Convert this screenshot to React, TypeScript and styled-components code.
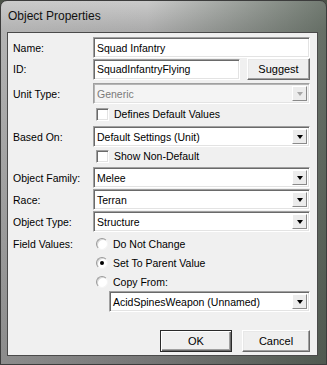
import styled, { createGlobalStyle } from 'styled-components';

const Global = createGlobalStyle`
  html, body { margin: 0; padding: 0; background: #4b5248; }
  body { font-family: "Liberation Sans", Arial, sans-serif; }
`;

const Frame = styled.div`
  width: 327px;
  height: 365px;
  box-sizing: border-box;
  padding: 31px 8px 8px 6px;
  border-radius: 7px 7px 0 0;
  border: 1px solid #3c3c3c;
  background:
    linear-gradient(90deg, rgba(205,205,205,0.25) 0%, rgba(60,70,60,0.0) 45%, rgba(55,70,55,0.6) 100%),
    linear-gradient(180deg, #cacaca 0%, #ababab 8%, #8c8c8c 60%, #767676 100%);
  display: flex;
  flex-direction: column;
  position: relative;
`;

const Title = styled.div`
  position: absolute;
  left: 7px;
  top: 8px;
  font-size: 12px;
  color: #111;
`;

const Client = styled.div`
  flex: 1;
  background: #f0f0f0;
  border: 1px solid #4a4a4a;
  padding: 4px 7px 0 5px;
  display: flex;
  flex-direction: column;
  font-size: 10.5px;
  color: #000;
`;

const Row = styled.div<{ $h: number; $mt?: number }>`
  display: grid;
  grid-template-columns: 80px 1fr;
  align-items: center;
  height: ${(p) => p.$h}px;
  margin-top: ${(p) => p.$mt ?? 0}px;
`;

const Label = styled.div`
  white-space: nowrap;
`;

const Sunken = styled.div<{ $disabled?: boolean }>`
  box-sizing: border-box;
  height: 100%;
  display: flex;
  align-items: center;
  background: ${(p) => (p.$disabled ? '#f4f4f4' : '#fff')};
  border: 1px solid;
  border-color: #a0a0a0 #fff #fff #a0a0a0;
  box-shadow: inset 1px 1px 0 ${(p) => (p.$disabled ? '#b5b5b5' : '#6a6a6a')}, inset -1px -1px 0 #e3e3e3;
  color: ${(p) => (p.$disabled ? '#7a7a7a' : '#000')};
  padding-left: 3px;
  white-space: nowrap;
  overflow: hidden;
`;

const Text = styled.span`
  flex: 1;
`;

const Arrow = styled.div<{ $disabled?: boolean }>`
  width: 15px;
  height: calc(100% - 4px);
  margin-right: 2px;
  box-sizing: border-box;
  background: #ececec;
  border: 1px solid;
  border-color: #fff #8a8a8a #8a8a8a #fff;
  display: flex;
  align-items: center;
  justify-content: center;
  &::after {
    content: '';
    border-left: 3.5px solid transparent;
    border-right: 3.5px solid transparent;
    border-top: 4px solid ${(p) => (p.$disabled ? '#a8a8a8' : '#000')};
  }
`;

const Pair = styled.div`
  display: flex;
  height: 100%;
  align-items: center;
  gap: 7px;
`;

const Button = styled.div<{ $w: number; $default?: boolean }>`
  box-sizing: border-box;
  width: ${(p) => p.$w}px;
  height: 22px;
  display: flex;
  align-items: center;
  justify-content: center;
  background: #efefef;
  border: 1px solid;
  border-color: ${(p) => (p.$default ? '#2a2a2a' : '#fff #6a6a6a #6a6a6a #fff')};
  box-shadow: ${(p) =>
    p.$default
      ? 'inset 1px 1px 0 #fff, inset -1px -1px 0 #6a6a6a, inset -2px -2px 0 #a0a0a0'
      : 'inset -1px -1px 0 #a0a0a0, inset 1px 1px 0 #e8e8e8'};
  font-size: 11px;
`;

const Check = styled.div`
  display: flex;
  align-items: center;
  gap: 5px;
  padding-left: 3px;
`;

const Box = styled.span`
  box-sizing: border-box;
  width: 13px;
  height: 13px;
  background: #fff;
  border: 1px solid;
  border-color: #a0a0a0 #fff #fff #a0a0a0;
  box-shadow: inset 1px 1px 0 #6a6a6a, inset -1px -1px 0 #e3e3e3;
`;

const Radio = styled.span<{ $on?: boolean }>`
  box-sizing: border-box;
  width: 12px;
  height: 12px;
  border-radius: 50%;
  background: #fff;
  border: 1px solid;
  border-color: #9a9a9a #f4f4f4 #f4f4f4 #9a9a9a;
  box-shadow: inset 1px 1px 0 #d8d8d8;
  display: flex;
  align-items: center;
  justify-content: center;
  &::after {
    content: '';
    display: ${(p) => (p.$on ? 'block' : 'none')};
    width: 4px;
    height: 4px;
    border-radius: 50%;
    background: #000;
  }
`;

const Indent = styled.div`
  padding-left: 16px;
  height: 100%;
`;

const Footer = styled.div`
  display: flex;
  justify-content: flex-end;
  gap: 10px;
  margin-top: 18px;
`;

function Select({ value, disabled }: { value: string; disabled?: boolean }) {
  return (
    <Sunken $disabled={disabled}>
      <Text>{value}</Text>
      <Arrow $disabled={disabled} />
    </Sunken>
  );
}

export default function App() {
  return (
    <>
      <Global />
      <Frame>
        <Title>Object Properties</Title>
        <Client>
          <Row $h={21}>
            <Label>Name:</Label>
            <Sunken>Squad Infantry</Sunken>
          </Row>
          <Row $h={22} $mt={0}>
            <Label>ID:</Label>
            <Pair>
              <Sunken style={{ width: 147, height: 21 }}>SquadInfantryFlying</Sunken>
              <Button $w={63}>Suggest</Button>
            </Pair>
          </Row>
          <Row $h={21} $mt={3}>
            <Label>Unit Type:</Label>
            <Select value="Generic" disabled />
          </Row>
          <Row $h={18} $mt={1}>
            <Label />
            <Check>
              <Box />
              Defines Default Values
            </Check>
          </Row>
          <Row $h={21} $mt={3}>
            <Label>Based On:</Label>
            <Select value="Default Settings (Unit)" />
          </Row>
          <Row $h={18} $mt={0}>
            <Label />
            <Check>
              <Box />
              Show Non-Default
            </Check>
          </Row>
          <Row $h={21} $mt={2}>
            <Label>Object Family:</Label>
            <Select value="Melee" />
          </Row>
          <Row $h={21} $mt={1}>
            <Label>Race:</Label>
            <Select value="Terran" />
          </Row>
          <Row $h={21} $mt={1}>
            <Label>Object Type:</Label>
            <Select value="Structure" />
          </Row>
          <Row $h={19} $mt={2}>
            <Label>Field Values:</Label>
            <Check>
              <Radio />
              Do Not Change
            </Check>
          </Row>
          <Row $h={19}>
            <Label />
            <Check>
              <Radio $on />
              Set To Parent Value
            </Check>
          </Row>
          <Row $h={19}>
            <Label />
            <Check>
              <Radio />
              Copy From:
            </Check>
          </Row>
          <Row $h={21}>
            <Label />
            <Indent>
              <Select value="AcidSpinesWeapon (Unnamed)" />
            </Indent>
          </Row>
          <Footer>
            <Button $w={72} $default>OK</Button>
            <Button $w={68}>Cancel</Button>
          </Footer>
        </Client>
      </Frame>
    </>
  );
}
